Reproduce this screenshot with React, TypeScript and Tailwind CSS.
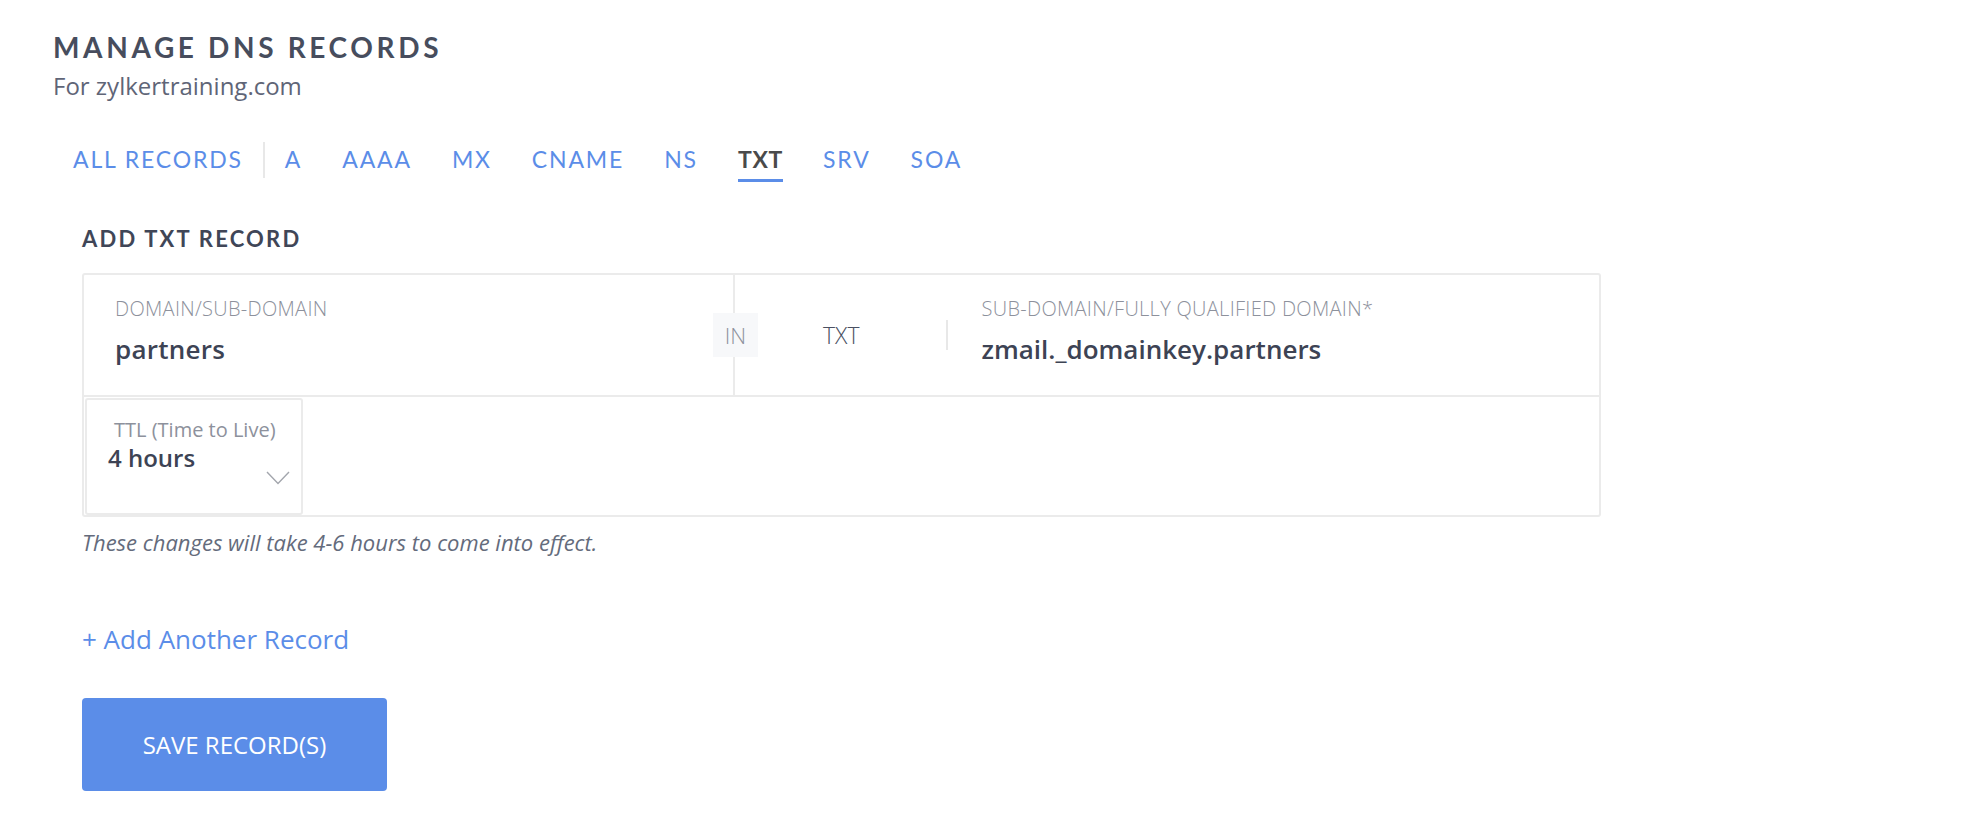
const tabs = ['A', 'AAAA', 'MX', 'CNAME', 'NS', 'TXT', 'SRV', 'SOA']

function Tab({ label, active }: { label: string; active?: boolean }) {
  return (
    <button className="flex h-[40px] flex-col items-stretch px-[20px]">
      <span
        className={`mt-[6px] text-[23px] leading-[23px] ${
          active ? 'font-bold tracking-[0.03em] text-[#4a4a4a]' : 'tracking-[0.08em] text-[#5b8de8]'
        }`}
      >
        {label}
      </span>
      {active && <span className="mt-auto h-[3px] bg-[#5b8de8]" />}
    </button>
  )
}

function Chevron() {
  return (
    <svg width="24" height="14" viewBox="0 0 24 14" fill="none">
      <polyline points="1,1 12,12.5 23,1" stroke="#a3a6ad" strokeWidth="1.4" />
    </svg>
  )
}

export default function App() {
  return (
    <div className="min-h-screen bg-white font-['Open_Sans',sans-serif] text-[#3d4354]">
      <div className="pl-[53px] pt-[33px]">
        {/* Header */}
        <h1 className="font-['Lato',sans-serif] text-[28px] leading-[28px] font-bold tracking-[0.13em] text-[#474d5d]">
          MANAGE DNS RECORDS
        </h1>
        <p className="mt-[13px] text-[24px] leading-[24px] text-[#5f6577]">For zylkertraining.com</p>

        {/* Record type tabs */}
        <nav className="mt-[44px] flex items-start font-['Lato',sans-serif]">
          <Tab label="ALL RECORDS" />
          <div className="h-[36px] w-[2px] bg-[#e8e8e8]" />
          {tabs.map((t) => (
            <Tab key={t} label={t} active={t === 'TXT'} />
          ))}
        </nav>

        <section className="ml-[29px]">
          <h2 className="mt-[46px] font-['Lato',sans-serif] text-[22px] leading-[22px] font-bold tracking-[0.1em] text-[#404657]">
            ADD TXT RECORD
          </h2>

          {/* Record form */}
          <div className="mt-[23px] w-[1519px] rounded-[3px] border-2 border-[#ebebeb]">
            <div className="flex h-[122px] border-b-2 border-[#ebebeb]">
              <div className="relative w-[651px] border-r-2 border-[#ebebeb] pt-[24px] pl-[31px]">
                <div className="text-[20px] leading-[20px] font-light tracking-[0.015em] text-[#8d919c]">
                  DOMAIN/SUB-DOMAIN
                </div>
                <div className="mt-[17px] text-[26px] leading-[26px] font-semibold tracking-[0.01em] text-[#3d4354]">
                  partners
                </div>
                <div className="absolute top-[38px] right-[-25px] flex h-[44px] w-[45px] items-center justify-center bg-[#f7f8fa] text-[22px] font-light text-[#8d919c]">
                  IN
                </div>
              </div>
              <div className="flex flex-1 items-center pl-[88px]">
                <span className="text-[23px] leading-[23px] font-light text-[#4a5062]">TXT</span>
                <div className="ml-[86px] h-[30px] w-[2px] bg-[#e8e8e8]" />
                <div className="ml-[34px] self-start pt-[24px]">
                  <div className="text-[20px] leading-[20px] font-light tracking-[0.015em] text-[#8d919c]">
                    SUB-DOMAIN/FULLY QUALIFIED DOMAIN*
                  </div>
                  <div className="mt-[17px] text-[26px] leading-[26px] font-semibold text-[#3d4354]">
                    zmail._domainkey.partners
                  </div>
                </div>
              </div>
            </div>
            <div className="h-[118px] pt-[1px] pl-[1px]">
              <div className="relative h-[117px] w-[218px] rounded-[3px] border-2 border-[#ebebeb] pt-[20px] pl-[21px]">
                <div className="ml-[6px] text-[20px] leading-[20px] text-[#8d919c]">TTL (Time to Live)</div>
                <div className="mt-[6px] text-[24px] leading-[24px] font-semibold text-[#3d4354]">4 hours</div>
                <div className="absolute top-[71px] right-[11px]">
                  <Chevron />
                </div>
              </div>
            </div>
          </div>

          <p className="mt-[14px] text-[22px] leading-[22px] italic text-[#646b7c]">
            These changes will take 4-6 hours to come into effect.
          </p>

          <button className="mt-[73px] block text-[26px] leading-[26px] text-[#5b8de8]">+ Add Another Record</button>

          <button className="mt-[46px] flex h-[93px] w-[305px] items-center justify-center rounded-[4px] bg-[#5b8de8] text-[24px] font-medium text-white">
            SAVE RECORD(S)
          </button>
        </section>
      </div>
    </div>
  )
}
